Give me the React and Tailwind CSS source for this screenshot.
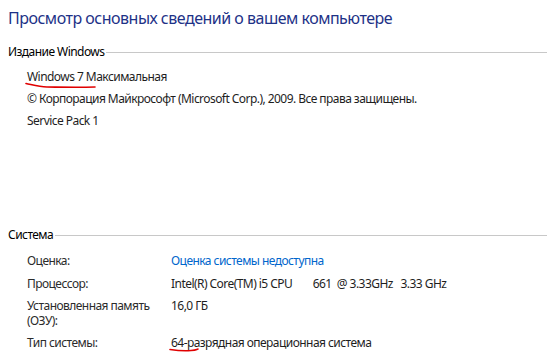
import React from "react";

const font = { fontFamily: '"Noto Sans", "Open Sans", sans-serif' };

function Section({ title, children, className }) {
  return (
    <div className={className}>
      <div className="flex items-center h-[16px]">
        <span className="text-[12px] text-black pl-[8px] pr-[2px]">{title}</span>
        <div className="flex-1 h-px bg-[#c8c8c8]" />
      </div>
      {children}
    </div>
  );
}

function Row({ label, children }) {
  return (
    <div className="flex text-[12px] leading-[15px]">
      <div className="w-[144px] shrink-0 text-[#2b2b2b] leading-[15px] flex flex-col">{label}</div>
      <div className="text-[#1e1e1e]">{children}</div>
    </div>
  );
}

export default function App() {
  return (
    <div className="w-[547px] h-[359px] bg-white overflow-hidden relative tracking-[-0.55px]" style={font}>
      <h1 className="pl-[8px] pt-[7px] text-[16px] leading-[22px] text-[#1e3287] font-normal tracking-[-0.5px]">
        Просмотр основных сведений о вашем компьютере
      </h1>

      <Section title="Издание Windows" className="mt-[15px]">
        <div className="pl-[27px] text-[12px] leading-[15px] text-[#1e1e1e] flex flex-col gap-[7px] mt-[9px]">
          <span className="relative w-fit">
            Windows 7 Максимальная
            <svg className="absolute left-[-2px] top-[13px]" width="74" height="8" viewBox="0 0 74 8">
              <path d="M1 1.5 C 8 3, 14 5, 22 5 S 50 5.5, 70 5" stroke="#e00000" strokeWidth="1.6" fill="none" strokeLinecap="round" />
            </svg>
          </span>
          <span>© Корпорация Майкрософт (Microsoft Corp.), 2009. Все права защищены.</span>
          <span>Service Pack 1</span>
        </div>
      </Section>

      <Section title="Система" className="mt-[99px]">
        <div className="pl-[27px] mt-[10px] flex flex-col">
          <Row label={<span>Оценка:</span>}>
            <span className="text-[#0066cc]">Оценка системы недоступна</span>
          </Row>
          <div className="h-[8px]" />
          <Row label={<span>Процессор:</span>}>
            <span className="whitespace-pre">Intel(R) Core(TM) i5 CPU        661  @ 3.33GHz   3.33 GHz</span>
          </Row>
          <div className="h-[7px]" />
          <Row label={<><span>Установленная память</span><span>(ОЗУ):</span></>}>16,0 ГБ</Row>
          <div className="h-[7px]" />
          <Row label={<span>Тип системы:</span>}>
            <span className="relative">
              64-разрядная операционная система
              <svg className="absolute left-[-2px] top-[13px]" width="30" height="6" viewBox="0 0 30 6">
                <path d="M1 2.5 C 8 3.5, 16 4, 22 3.5 S 27 2.5, 29 2" stroke="#e00000" strokeWidth="1.6" fill="none" strokeLinecap="round" />
              </svg>
            </span>
          </Row>
        </div>
      </Section>
    </div>
  );
}
